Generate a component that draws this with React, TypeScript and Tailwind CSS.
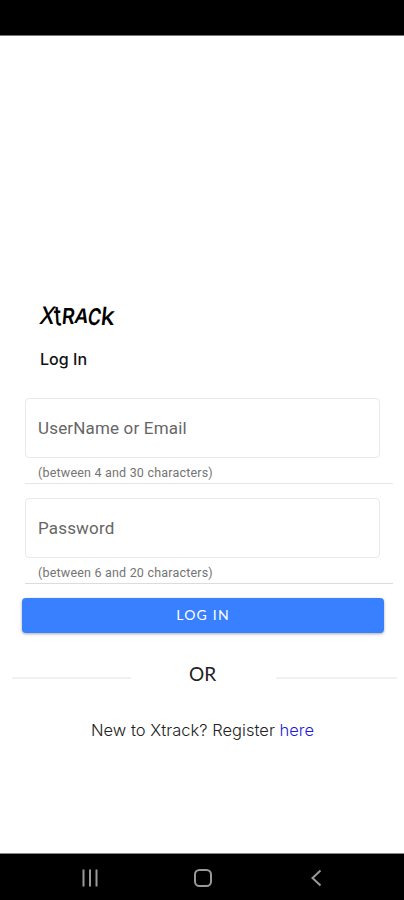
type FieldProps = { label: string; hint: string; line: string };

function Field({ label, hint, line }: FieldProps) {
  return (
    <div className={`ml-[25px] mr-[11px] h-[86px] border-b ${line}`}>
      <div className="flex h-[60px] w-[355px] items-center rounded-[4px] border border-[#e9e9e9] pl-[12px] pt-[2px] text-[17px] tracking-[0.17px] text-[#666]">
        {label}
      </div>
      <p className="mt-[6px] pl-[13px] text-[12.5px] leading-[18px] tracking-[0.2px] text-[#747474]">{hint}</p>
    </div>
  );
}

function Brand() {
  return (
    <h1 className="ml-[40px] flex h-[28px] items-center pt-[2px] font-['Inter',sans-serif] font-medium leading-none text-black" aria-label="Xtrack">
      <span className="w-[14px] origin-left scale-x-[.9] -skew-x-12 text-[24px]">X</span>
      <span className="w-[8px] origin-left -rotate-3 scale-x-[.85] scale-y-110 text-[25px]">t</span>
      <span className="w-[13px] origin-left scale-x-[.95] scale-y-105 -skew-x-6 text-[21px] font-semibold">R</span>
      <span className="w-[13px] origin-left scale-x-[.95] -skew-x-12 text-[20px] font-semibold">A</span>
      <span className="w-[13px] origin-left scale-x-[.85] scale-y-110 -skew-x-12 text-[21px] font-semibold">C</span>
      <span className="w-[14px] origin-left -skew-x-6 text-[25px]">k</span>
    </h1>
  );
}

export default function App() {
  return (
    <div className="flex h-[900px] w-[404px] flex-col overflow-hidden bg-white font-['Roboto',sans-serif]">
      <div className="h-[36px] shrink-0 border-b border-[#777] bg-black" />
      <main className="flex flex-1 flex-col pt-[265px]">
        <Brand />
        <h2 className="ml-[40px] mt-[18px] font-['Inter',sans-serif] text-[16px] font-medium leading-[24px] tracking-[0.05px] text-[#111]">Log In</h2>
        <div className="mt-[27px] flex flex-col gap-[14px]">
          <Field label="UserName or Email" hint="(between 4 and 30 characters)" line="border-[#e6e6e6]" />
          <Field label="Password" hint="(between 6 and 20 characters)" line="border-[#dcdcdc]" />
        </div>
        <button className="ml-[22px] mt-[14px] h-[35px] w-[362px] rounded-[4px] bg-[#3880ff] pb-[2px] font-['Lato',sans-serif] text-[14px] tracking-[1.2px] text-white shadow-[0_1px_3px_rgba(0,0,0,0.35)]">
          LOG IN
        </button>
        <div className="mt-[29px] flex h-[24px] items-center pl-[12px] pr-[7px]">
          <span className="mt-[7px] h-[2px] w-[119px] bg-[#f1f1f1]" />
          <span className="w-[145px] pr-[2px] text-center font-['Lato',sans-serif] text-[19px] text-[#222]">OR</span>
          <span className="mt-[7px] h-[2px] flex-1 bg-[#f1f1f1]" />
        </div>
        <p className="mt-[32px] whitespace-nowrap pl-[91px] font-['Inter',sans-serif] text-[16.5px] font-light leading-[24px] tracking-[0.03px] text-[#222]">
          New to Xtrack? Register <a className="text-[#2418dc]">here</a>
        </p>
      </main>
      <nav className="h-[47px] shrink-0 border-t border-[#888] bg-black">
        <svg width="404" height="46" fill="none" stroke="#999" strokeWidth="2">
          <path d="M83.5 15.5v17M90 15.5v17M96.500 15.500v17" />
          <rect x="195" y="16" width="16" height="16" rx="4.500" />
          <path d="M320.500 16.500L312.500 24l8 7.500" />
        </svg>
      </nav>
    </div>
  );
}
